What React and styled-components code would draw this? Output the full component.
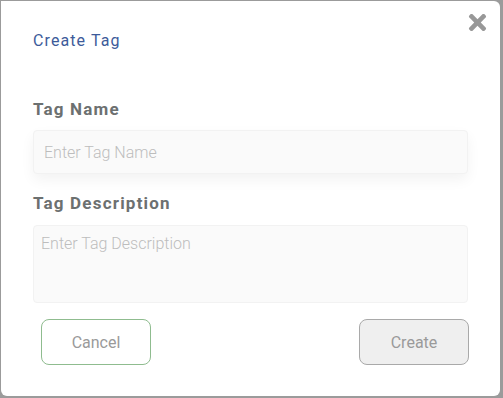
import styled, { createGlobalStyle } from 'styled-components';
import { FaTimes } from 'react-icons/fa';

const GlobalStyle = createGlobalStyle`
  html, body {
    margin: 0;
    padding: 0;
    background: #9b9b9b;
    font-family: Roboto, "Liberation Sans", sans-serif;
  }
`;

const Backdrop = styled.div`
  width: 503px;
  height: 398px;
  padding: 1px 3px 2px 1px;
  box-sizing: border-box;
`;

const Modal = styled.section`
  position: relative;
  width: 499px;
  height: 395px;
  background: #fff;
  border-radius: 0 6px 6px 6px;
  box-sizing: border-box;
  padding: 28px 32px 0 32px;
  display: flex;
  flex-direction: column;
`;

const Title = styled.h1`
  margin: 0;
  font-size: 16px;
  font-weight: 400;
  line-height: 24px;
  letter-spacing: 1.1px;
  color: #3d5b9a;
`;

const CloseButton = styled.button`
  position: absolute;
  top: 9px;
  right: 10px;
  border: none;
  background: none;
  padding: 0;
  color: #989898;
  display: flex;
  cursor: pointer;
`;

const Label = styled.label`
  display: block;
  font-size: 17px;
  font-weight: 700;
  line-height: 20px;
  letter-spacing: 1.2px;
  color: #6c7070;
  margin-top: ${(p) => p.$top}px;
`;

const field = `
  width: 100%;
  box-sizing: border-box;
  background: #fafafa;
  border: 1px solid #f2f2f2;
  border-radius: 4px;
  font-family: Roboto, "Liberation Sans", sans-serif;
  font-size: 16px;
  font-weight: 300;
  color: #555;
  outline: none;
  &::placeholder {
    color: #bdbdbd;
  }
`;

const Input = styled.input`
  ${field}
  height: 44px;
  margin-top: 11px;
  padding: 0 10px;
  box-shadow: 0 6px 14px rgba(0, 0, 0, 0.05);
`;

const TextArea = styled.textarea`
  ${field}
  height: 78px;
  margin-top: 12px;
  padding: 8px 7px;
  resize: none;
`;

const Footer = styled.div`
  display: flex;
  justify-content: space-between;
  padding: 0 0 0 8px;
  margin-top: 16px;
  margin-right: -1px;
`;

const Button = styled.button`
  width: 110px;
  height: 46px;
  border-radius: 8px;
  font-family: Roboto, "Liberation Sans", sans-serif;
  font-size: 16px;
  color: #9a9a9a;
  border: 1px solid ${(p) => (p.$primary ? '#a9a9a9' : '#8fbc8f')};
  background: ${(p) => (p.$primary ? '#efefef' : '#fff')};
  cursor: pointer;
`;

export default function App() {
  return (
    <>
      <GlobalStyle />
      <Backdrop>
        <Modal>
          <CloseButton aria-label="Close">
            <FaTimes size={25} />
          </CloseButton>
          <Title>Create Tag</Title>
          <Label $top={46}>Tag Name</Label>
          <Input placeholder="Enter Tag Name" />
          <Label $top={19}>Tag Description</Label>
          <TextArea placeholder="Enter Tag Description" />
          <Footer>
            <Button>Cancel</Button>
            <Button $primary>Create</Button>
          </Footer>
        </Modal>
      </Backdrop>
    </>
  );
}
